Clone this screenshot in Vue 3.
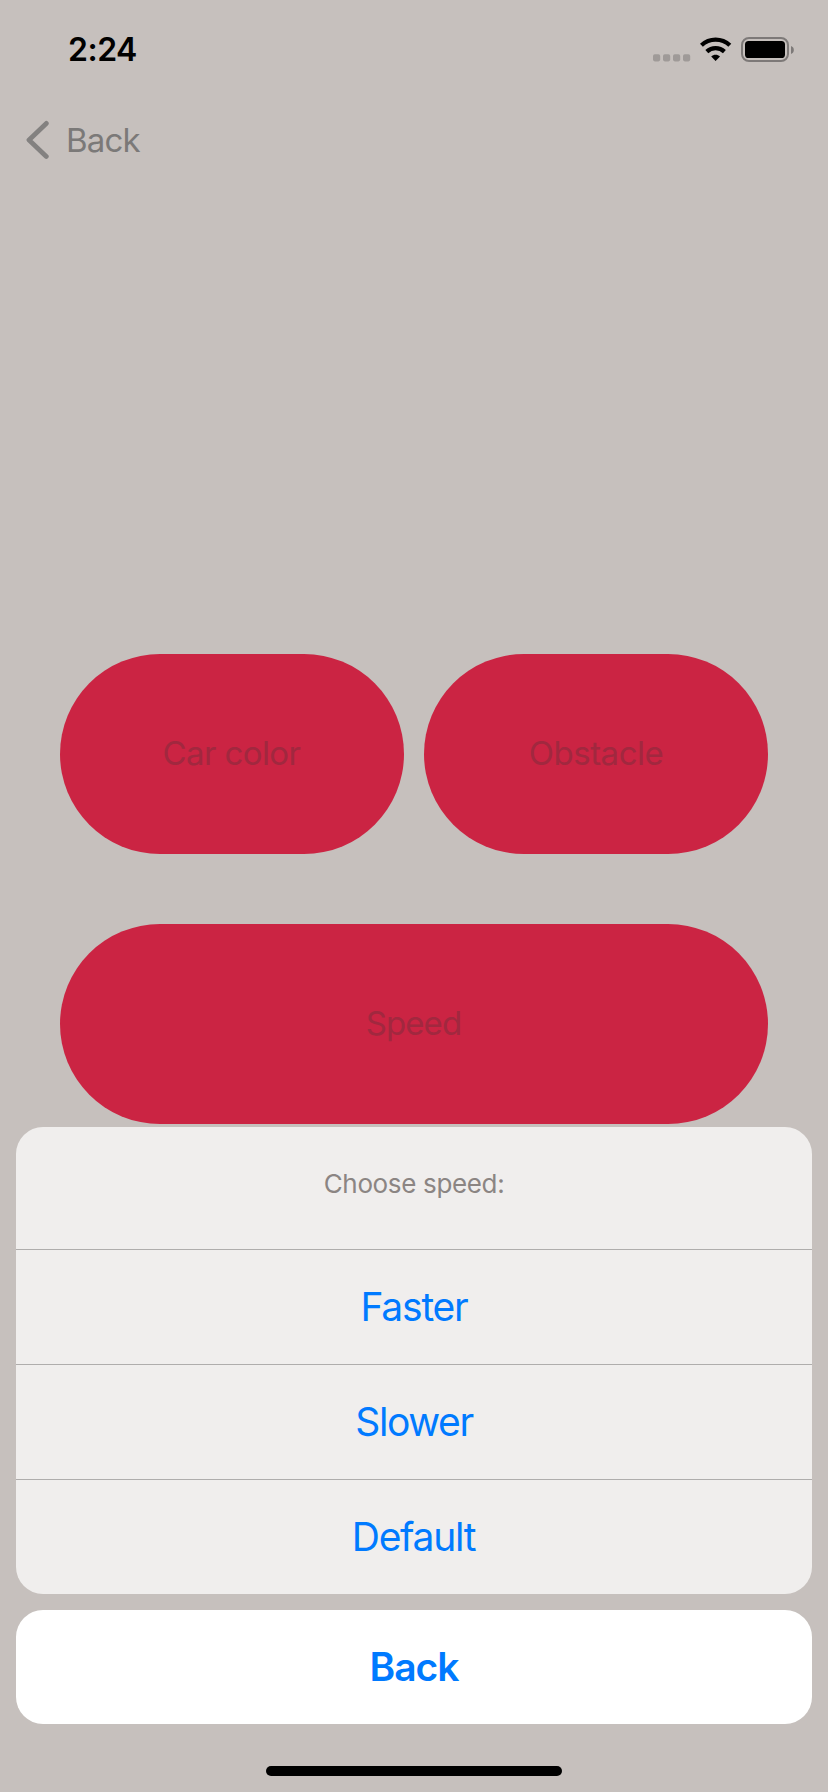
<script setup>
const options = [
  { label: 'Faster', cls: 'faster' },
  { label: 'Slower', cls: 'slower' },
  { label: 'Default', cls: 'default' },
]
</script>

<template>
  <div class="screen">
    <header class="status">
      <span class="time">2:24</span>
      <div class="indicators">
        <svg class="cell" width="38" height="8" viewBox="0 0 38 8">
          <rect x="0" y="0.2" width="7.2" height="7.2" rx="1.8" />
          <rect x="10" y="0.2" width="7.2" height="7.2" rx="1.8" />
          <rect x="20" y="0.2" width="7.2" height="7.2" rx="1.8" />
          <rect x="30" y="0.2" width="7.2" height="7.2" rx="1.8" />
        </svg>
        <svg class="wifi" width="32" height="24" viewBox="0 0 32 24">
          <path d="M1.4 8.3C9.4.8 21.8.8 29.8 8.3" fill="none" stroke="#000" stroke-width="4.3" />
          <path d="M6.8 14.6C11.8 10 19.4 10 24.4 14.6" fill="none" stroke="#000" stroke-width="4.3" />
          <path d="M15.6 23.9L11.2 19.6C13.6 17.2 17.6 17.2 20 19.6Z" />
        </svg>
        <svg class="battery" width="54" height="26" viewBox="0 0 54 26">
          <rect x="1" y="1" width="46" height="23" rx="7" fill="none" stroke="#7d7978" stroke-width="2" />
          <rect x="4" y="4" width="40" height="17" rx="3.6" />
          <path d="M50 9C53.8 10.2 53.8 15.8 50 17Z" fill="#7d7978" />
        </svg>
      </div>
    </header>

    <nav class="nav">
      <svg width="24" height="40" viewBox="0 0 24 40">
        <path d="M20.3 3.4L3 20L20.3 36.4" fill="none" stroke="#838180" stroke-width="4.8" stroke-linecap="round" stroke-linejoin="round" />
      </svg>
      <span>Back</span>
    </nav>

    <main class="buttons">
      <button class="pill"><span class="car">Car color</span></button>
      <button class="pill"><span class="obstacle">Obstacle</span></button>
      <button class="pill wide"><span class="speed">Speed</span></button>
    </main>

    <section class="sheet">
      <p class="title">Choose speed:</p>
      <button v-for="o in options" :key="o.label" class="option">
        <span :class="o.cls">{{ o.label }}</span>
      </button>
    </section>
    <button class="cancel"><span>Back</span></button>
    <div class="home"></div>
  </div>
</template>

<style>
body {
  background: #c6c0bd;
}
</style>

<style scoped>
.screen {
  display: flex;
  flex-direction: column;
  width: 828px;
  height: 1792px;
  overflow: hidden;
  background: #c6c0bd;
  font-family: Inter, "Liberation Sans", sans-serif;
}
button {
  border: 0;
  padding: 0;
  margin: 0;
  font: inherit;
  display: flex;
  align-items: center;
  justify-content: center;
}
.status {
  flex: none;
  display: flex;
  justify-content: space-between;
  height: 96px;
  padding: 0 33px 0 68px;
}
.time {
  margin-top: 30px;
  font-size: 32px;
  line-height: 40px;
  font-weight: 600;
  letter-spacing: -0.5px;
}
.indicators {
  display: flex;
  align-items: flex-start;
}
.cell {
  margin-top: 54px;
  fill: #9f9a98;
}
.wifi {
  margin: 37px 0 0 9px;
}
.battery {
  margin: 37px 0 0 9px;
}
.nav {
  flex: none;
  display: flex;
  align-items: center;
  height: 88px;
  padding-left: 26px;
  color: #7b7978;
}
.nav span {
  margin-left: 16px;
  font-size: 33px;
  line-height: 40px;
  letter-spacing: -0.8px;
}
.buttons {
  flex: none;
  display: grid;
  grid-template-columns: 344px 344px;
  grid-auto-rows: 200px;
  column-gap: 20px;
  row-gap: 70px;
  margin: 470px 60px 0;
}
.pill {
  padding-bottom: 2px;
  border-radius: 100px;
  background: #cb2443;
  color: #a1283f;
  font-size: 33px;
  line-height: 40px;
}
.car {
  margin-right: 1px;
  letter-spacing: -0.6px;
}
.obstacle {
  letter-spacing: -0.5px;
}
.speed {
  margin-right: 1px;
  letter-spacing: -0.9px;
}
.wide {
  grid-column: 1 / 3;
}
.sheet {
  flex: none;
  height: 467px;
  margin: 3px 16px 0;
  border-radius: 27px;
  background: #f0eeed;
  overflow: hidden;
}
.title {
  margin: 0;
  height: 122px;
  padding-top: 41px;
  box-sizing: border-box;
  text-align: center;
  font-size: 26px;
  line-height: 32px;
  letter-spacing: -0.35px;
  color: #8b8583;
}
.option {
  width: 100%;
  height: 115px;
  box-sizing: border-box;
  border-top: 1px solid #afadac;
  background: transparent;
  color: #007aff;
  font-size: 39px;
  line-height: 48px;
}
.faster {
  letter-spacing: -1.2px;
}
.slower {
  letter-spacing: -1.4px;
}
.default {
  margin-right: 1px;
  letter-spacing: -1.3px;
}
.cancel {
  flex: none;
  height: 114px;
  margin: 16px 16px 0;
  border-radius: 27px;
  background: #fff;
  color: #007aff;
  font-size: 39px;
  line-height: 48px;
  font-weight: 600;
  letter-spacing: -1px;
}
.home {
  flex: none;
  width: 296px;
  height: 10px;
  margin: 42px auto 0;
  border-radius: 5px;
  background: #000;
}
</style>
